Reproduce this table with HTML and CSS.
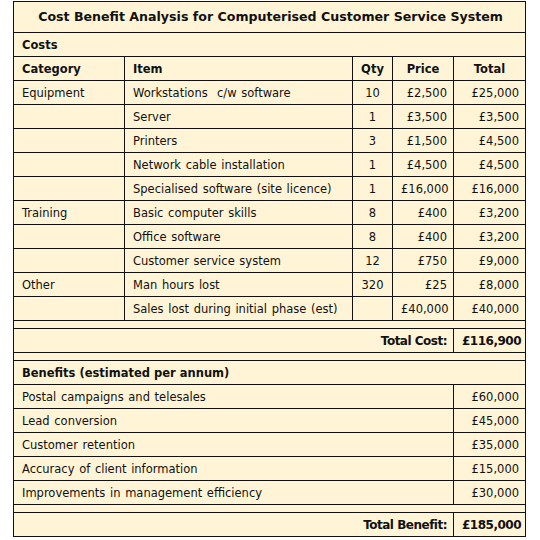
FILE: index.html
```html
<!DOCTYPE html>
<html lang="en">
<head>
<meta charset="UTF-8" />
<title>Cost Benefit Analysis</title>
<link rel="stylesheet" href="styles.css">
</head>
<body>
<div class="sheet">
  <table class="cba">
    <colgroup>
      <col class="c-cat" />
      <col class="c-item" />
      <col class="c-qty" />
      <col class="c-price" />
      <col class="c-total" />
    </colgroup>

    <!-- Title -->
    <tr class="title">
      <td colspan="5">Cost Benefit Analysis for Computerised Customer Service System</td>
    </tr>

    <!-- Costs -->
    <tr class="section"><td colspan="5">Costs</td></tr>
    <tr class="head">
      <td>Category</td>
      <td>Item</td>
      <td class="mid">Qty</td>
      <td class="mid">Price</td>
      <td class="mid">Total</td>
    </tr>
    <tr>
      <td>Equipment</td>
      <td>Workstations&nbsp; c/w software</td>
      <td class="mid">10</td>
      <td class="num">£2,500</td>
      <td class="num">£25,000</td>
    </tr>
    <tr>
      <td></td>
      <td>Server</td>
      <td class="mid">1</td>
      <td class="num">£3,500</td>
      <td class="num">£3,500</td>
    </tr>
    <tr>
      <td></td>
      <td>Printers</td>
      <td class="mid">3</td>
      <td class="num">£1,500</td>
      <td class="num">£4,500</td>
    </tr>
    <tr>
      <td></td>
      <td>Network cable installation</td>
      <td class="mid">1</td>
      <td class="num">£4,500</td>
      <td class="num">£4,500</td>
    </tr>
    <tr>
      <td></td>
      <td>Specialised software (site licence)</td>
      <td class="mid">1</td>
      <td class="num">£16,000</td>
      <td class="num">£16,000</td>
    </tr>
    <tr>
      <td>Training</td>
      <td>Basic computer skills</td>
      <td class="mid">8</td>
      <td class="num">£400</td>
      <td class="num">£3,200</td>
    </tr>
    <tr>
      <td></td>
      <td>Office software</td>
      <td class="mid">8</td>
      <td class="num">£400</td>
      <td class="num">£3,200</td>
    </tr>
    <tr>
      <td></td>
      <td>Customer service system</td>
      <td class="mid">12</td>
      <td class="num">£750</td>
      <td class="num">£9,000</td>
    </tr>
    <tr>
      <td>Other</td>
      <td>Man hours lost</td>
      <td class="mid">320</td>
      <td class="num">£25</td>
      <td class="num">£8,000</td>
    </tr>
    <tr>
      <td></td>
      <td>Sales lost during initial phase (est)</td>
      <td></td>
      <td class="num">£40,000</td>
      <td class="num">£40,000</td>
    </tr>
    <tr class="gap"><td colspan="5"></td></tr>
    <tr class="sum">
      <td colspan="4" class="num">Total Cost:</td>
      <td class="num">£116,900</td>
    </tr>
    <tr class="gap"><td colspan="5"></td></tr>

    <!-- Benefits -->
    <tr class="section"><td colspan="5">Benefits (estimated per annum)</td></tr>
    <tr>
      <td colspan="4">Postal campaigns and telesales</td>
      <td class="num">£60,000</td>
    </tr>
    <tr>
      <td colspan="4">Lead conversion</td>
      <td class="num">£45,000</td>
    </tr>
    <tr>
      <td colspan="4">Customer retention</td>
      <td class="num">£35,000</td>
    </tr>
    <tr>
      <td colspan="4">Accuracy of client information</td>
      <td class="num">£15,000</td>
    </tr>
    <tr>
      <td colspan="4">Improvements in management efficiency</td>
      <td class="num">£30,000</td>
    </tr>
    <tr class="gap"><td colspan="5"></td></tr>
    <tr class="sum">
      <td colspan="4" class="num">Total Benefit:</td>
      <td class="num">£185,000</td>
    </tr>
  </table>
</div>
</body>
</html>
```

FILE: styles.css
```css
body {
  margin: 0;
  background: #fff;
  font-family: "DejaVu Sans", sans-serif;
  color: #111;
}
.sheet {
  padding: 1px 0 0 13px;
}
/* Table */
.cba {
  border-collapse: collapse;
  table-layout: fixed;
  width: 513px;
  background: #fff4d6;
  font-size: 11.5px;
  word-spacing: 1px;
}
.c-cat { width: 111px; }
.c-item { width: 228px; }
.c-qty { width: 40px; }
.c-price { width: 61px; }
.c-total { width: 72px; }
.cba td {
  border: 1px solid #111;
  height: 24px;
  padding: 0 6px 0 8px;
  box-sizing: border-box;
  white-space: nowrap;
  line-height: 14px;
}
.cba .mid { text-align: center; padding: 0 2px; }
.cba .num { text-align: right; }
/* Rows */
.title td {
  height: 31px;
  text-align: center;
  font-weight: bold;
  font-size: 12.6px;
  word-spacing: 0;
}
.section td,
.head td,
.sum td {
  font-weight: bold;
  word-spacing: 0;
}
.sum td {
  font-size: 12px;
  letter-spacing: -0.5px;
}
.gap td {
  height: 8px;
  padding: 0;
  line-height: 0;
}
```
